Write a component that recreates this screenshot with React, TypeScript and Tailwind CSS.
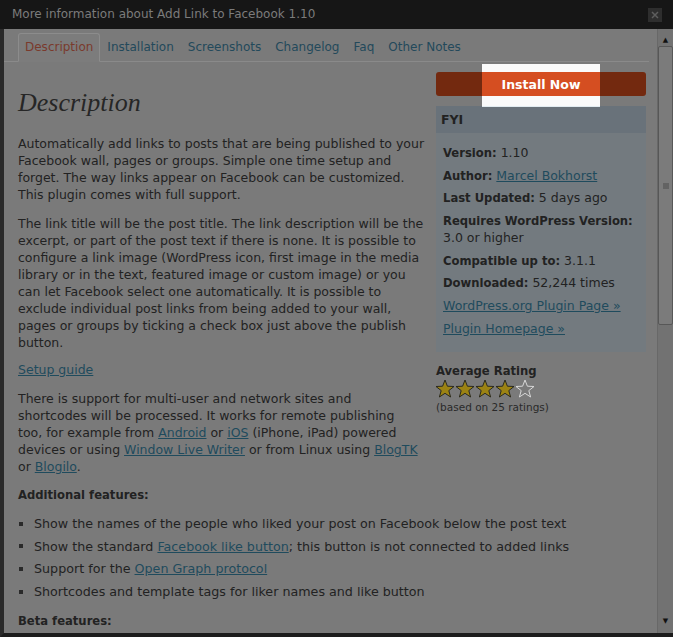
import React from "react";

const link = "text-[#1f4b5d] underline";
const label = "text-[11.6px] leading-none";

function Star({ filled }: { filled: boolean }) {
  return (
    <svg width="20" height="19" viewBox="0 0 20 19">
      <path
        d="M10 1 L12.4 7.2 L19 7.5 L13.8 11.6 L15.6 18 L10 14.3 L4.4 18 L6.2 11.6 L1 7.5 L7.6 7.2 Z"
        fill={filled ? "#9c8313" : "none"}
        stroke={filled ? "#2b2a1c" : "#d8d8d8"}
        strokeWidth="1"
        strokeLinejoin="miter"
      />
    </svg>
  );
}

function Tabs() {
  const tabs = ["Description", "Installation", "Screenshots", "Changelog", "Faq", "Other Notes"];
  return (
    <div className="flex pl-[14px] pt-[4px] border-b border-[#8a8a8a] mr-[8px]">
      {tabs.map((t, i) => (
        <div
          key={t}
          className={`h-[29px] -mb-px flex items-center px-[6px] border rounded-t-[3px] ${
            i === 0 ? "border-[#8c8c8c] border-b-[#7c7c7c] bg-[#7c7c7c] text-[#7a3a2c]" : "border-transparent text-[#23495b]"
          }`}
        >
          {t}
        </div>
      ))}
    </div>
  );
}

function Fyi() {
  const rows: [string, React.ReactNode][] = [
    ["Version:", "1.10"],
    ["Author:", <a className={link}>Marcel Bokhorst</a>],
    ["Last Updated:", "5 days ago"],
    ["Compatible up to:", "3.1.1"],
    ["Downloaded:", "52,244 times"],
  ];
  return (
    <div className="bg-[#737a7f]">
      <div className="h-[27px] bg-[#69727a] flex items-center px-[5px] font-bold text-[12.5px] text-[#222]">FYI</div>
      <div className="px-[7px] pt-[11px] pb-[15px] flex flex-col gap-[5.7px] whitespace-nowrap">
        {rows.slice(0, 3).map(([k, v]) => (
          <div key={k}>
            <b className={label}>{k}</b> {v}
          </div>
        ))}
        <div>
          <b className={label}>Requires WordPress Version:</b>
          <br />
          3.0 or higher
        </div>
        {rows.slice(3).map(([k, v]) => (
          <div key={k}>
            <b className={label}>{k}</b> {v}
          </div>
        ))}
        <div>
          <a className={link}>WordPress.org Plugin Page »</a>
        </div>
        <div>
          <a className={link}>Plugin Homepage »</a>
        </div>
      </div>
    </div>
  );
}

export default function App() {
  return (
    <div className="w-[673px] h-[637px] bg-[#161616] flex flex-col overflow-hidden font-['DejaVu_Sans',Verdana,sans-serif] text-[12px] leading-[17px] text-[#222]">
      <div className="h-[29px] shrink-0 flex items-center justify-between pl-[12px] pr-[11px] text-[#7b7b7b]">
        <span>More information about Add Link to Facebook 1.10</span>
        <div className="w-[14px] h-[14px] bg-[#2e2e2e] flex items-center justify-center">
          <svg width="8" height="8" viewBox="0 0 8 8">
            <path d="M1 1 L7 7 M7 1 L1 7" stroke="#5e5e5e" strokeWidth="1.5" />
          </svg>
        </div>
      </div>

      <div className="flex-1 flex border-l-4 border-[#2a2a2a] border-b-4 border-b-[#1c1c1c] min-h-0">
        <div className="flex-1 bg-[#7a7a7a] overflow-hidden">
          <Tabs />
          <div className="flex pl-[14px] pr-[10px] gap-[10px] text-[12.5px]">
            <div className="w-[408px] shrink-0 pt-[26px] whitespace-nowrap">
              <h2 className="font-['Liberation_Serif',serif] italic text-[26px] leading-[30px] text-[#262626] mb-[17px]">
                Description
              </h2>
              <p className="mb-[12px]">
                Automatically add links to posts that are being published to your
                <br />
                Facebook wall, pages or groups. Simple one time setup and
                <br />
                forget. The way links appear on Facebook can be customized.
                <br />
                This plugin comes with full support.
              </p>
              <p className="mb-[10px]">
                The link title will be the post title. The link description will be the
                <br />
                excerpt, or part of the post text if there is none. It is possible to
                <br />
                configure a link image (WordPress icon, first image in the media
                <br />
                library or in the text, featured image or custom image) or you
                <br />
                can let Facebook select one automatically. It is possible to
                <br />
                exclude individual post links from being added to your wall,
                <br />
                pages or groups by ticking a check box just above the publish
                <br />
                button.
              </p>
              <p className="mb-[12px]">
                <a className={link}>Setup guide</a>
              </p>
              <p className="mb-[12px]">
                There is support for multi-user and network sites and
                <br />
                shortcodes will be processed. It works for remote publishing
                <br />
                too, for example from <a className={link}>Android</a> or <a className={link}>iOS</a> (iPhone, iPad) powered
                <br />
                devices or using <a className={link}>Window Live Writer</a> or from Linux using{" "}
                <a className={link}>BlogTK</a>
                <br />
                or <a className={link}>Blogilo</a>.
              </p>
              <p className="font-bold text-[11.6px] mb-[11px]">Additional features:</p>
              <ul className="flex flex-col gap-[5.7px] mb-[13px] text-[12.7px]">
                {[
                  <>Show the names of the people who liked your post on Facebook below the post text</>,
                  <>
                    Show the standard <a className={link}>Facebook like button</a>; this button is not connected to added links
                  </>,
                  <>
                    Support for the <a className={link}>Open Graph protocol</a>
                  </>,
                  <>Shortcodes and template tags for liker names and like button</>,
                ].map((c, i) => (
                  <li key={i} className="flex items-center w-max">
                    <span className="shrink-0 w-[4px] h-[4px] bg-[#2a2a2a] ml-[1px] mr-[11px]" />
                    <span>{c}</span>
                  </li>
                ))}
              </ul>
              <p className="font-bold text-[11.6px]">Beta features:</p>
            </div>

            <div className="w-[210px] shrink-0 pt-[10px] text-[12.5px]">
              <div className="relative h-[24px] rounded-[3px] bg-[#73290f]">
                <div className="absolute left-[46px] -top-[8px] w-[118px] h-[43px] bg-[#fafafa] border-b border-[#e2ecf1]">
                  <div className="mt-[8px] h-[24px] bg-[#d54e21] flex items-center justify-center text-white font-bold text-[12.5px]">
                    Install Now
                  </div>
                </div>
              </div>
              <div className="mt-[10px]">
                <Fyi />
              </div>
              <div className="mt-[11px] font-bold text-[11.6px]">Average Rating</div>
              <div className="flex -ml-[1px] -mt-[1px]">
                {[1, 2, 3, 4, 5].map((n) => (
                  <Star key={n} filled={n <= 4} />
                ))}
              </div>
              <div className="mt-[2px] text-[10.5px] leading-[14px] text-[#2a2a2a]">(based on 25 ratings)</div>
            </div>
          </div>
        </div>

        <div className="w-[16px] shrink-0 bg-[#727272] border-l border-[#686868] flex flex-col items-center">
          <div className="h-[17px] flex items-end pb-[2px] text-[7px] leading-none text-[#111]">▲</div>
          <div className="w-[15px] h-[279px] bg-[#7b7b7b] border border-[#575757] rounded-[2px] flex items-center justify-center">
            <svg width="6" height="6" viewBox="0 0 6 6">
              <path d="M0 1 H6 M0 3 H6 M0 5 H6" stroke="#4d4d4d" strokeWidth="1" />
            </svg>
          </div>
          <div className="flex-1" />
          <div className="h-[15px] text-[7px] leading-none text-[#111]">▼</div>
        </div>
      </div>
    </div>
  );
}
